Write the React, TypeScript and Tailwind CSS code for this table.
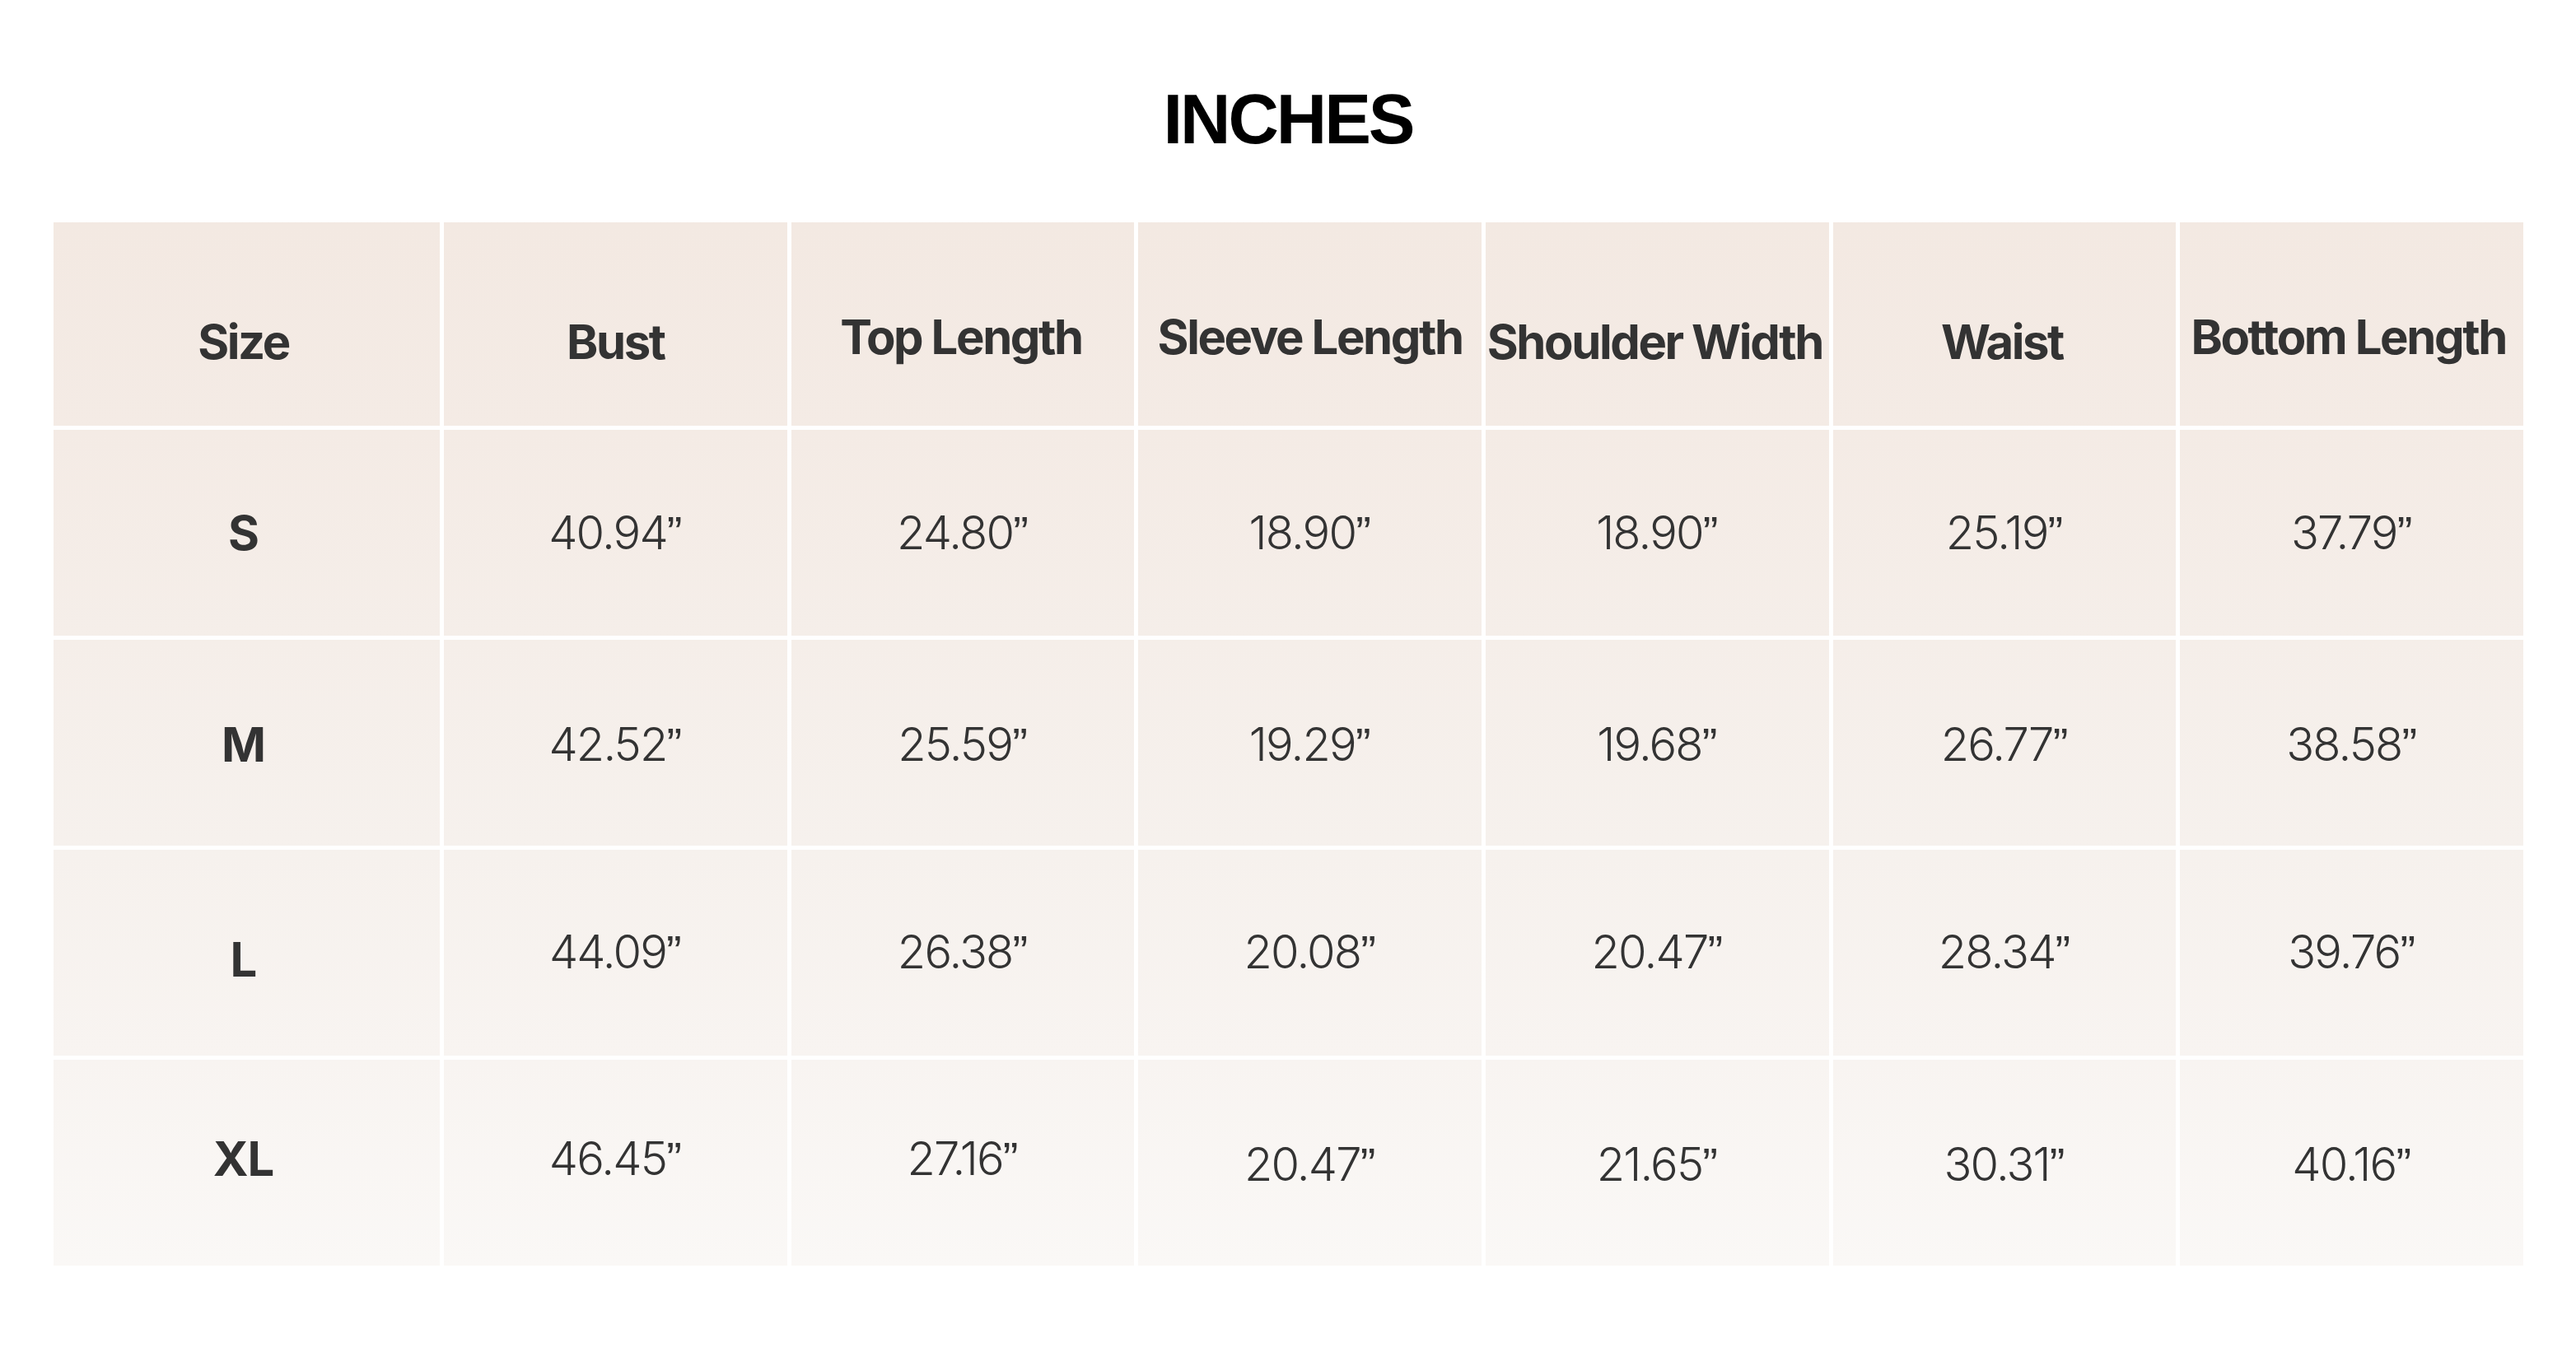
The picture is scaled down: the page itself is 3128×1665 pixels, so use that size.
import React from "react";

const headers = ["Size", "Bust", "Top Length", "Sleeve Length", "Shoulder Width", "Waist", "Bottom Length"];
// the "Length" headers sit a little higher in their cells
const headerPad = [
  "pt-[44px] pr-[8px]",
  "pt-[44px]",
  "pt-[32px] pr-[4px]",
  "pt-[32px]",
  "pt-[44px] pr-[6px]",
  "pt-[44px] pr-[6px]",
  "pt-[32px] pr-[8px]",
];

const rows: { size: string; vals: string[]; cls: string; pad: string }[] = [
  { size: "S", vals: ["40.94", "24.80", "18.90", "18.90", "25.19", "37.79"], cls: "from-[#f4ebe5] to-[#f5eee9]", pad: "" },
  { size: "M", vals: ["42.52", "25.59", "19.29", "19.68", "26.77", "38.58"], cls: "from-[#f5eee9] to-[#f6f1ed]", pad: "pt-[4px]" },
  { size: "L", vals: ["44.09", "26.38", "20.08", "20.47", "28.34", "39.76"], cls: "from-[#f6f1ed] to-[#f8f4f1]", pad: "" },
  { size: "XL", vals: ["46.45", "27.16", "20.47", "21.65", "30.31", "40.16"], cls: "from-[#f8f4f1] to-[#faf8f6]", pad: "" },
];

function valPad(size: string, j: number) {
  if (size === "XL") return j >= 2 ? "pt-[4px]" : "pb-[10px]";
  if (size === "L") return "pb-[2px]";
  if (size === "M") return "pt-[4px]";
  return "";
}

export default function App() {
  return (
    <div className="w-[3128px] h-[1665px] bg-white pt-[102px]">
      <h1 className="h-[85px] text-center text-[85px] leading-[85px] font-bold tracking-[-3px] text-black font-['Liberation_Sans',Arial,sans-serif]">
        INCHES
      </h1>
      <div className="mt-[83px] pl-[65px] pr-[64px]">
        <div className="grid grid-cols-[469px_repeat(6,minmax(0,1fr))] grid-rows-[247px_250px_250px_250px_250px] gap-[5px] text-[#333333]">
          {headers.map((h, i) => (
            <div
              key={h}
              className={`bg-gradient-to-b from-[#f3e9e2] to-[#f4ebe5] flex justify-center items-center whitespace-nowrap text-[58px] font-bold tracking-[-2.4px] font-['Inter',sans-serif] ${headerPad[i]}`}
            >
              {h}
            </div>
          ))}
          {rows.map((r) => (
            <React.Fragment key={r.size}>
              <div
                className={`bg-gradient-to-b ${r.cls} flex justify-center items-center pr-[8px] text-[58px] font-bold tracking-[-1px] font-['Inter',sans-serif] ${
                  r.size === "L" ? "pt-[16px]" : r.size === "XL" ? "pb-[10px]" : r.pad
                }`}
              >
                {r.size}
              </div>
              {r.vals.map((v, j) => (
                <div
                  key={j}
                  className={`bg-gradient-to-b ${r.cls} flex justify-center items-center whitespace-nowrap text-[56px] font-light tracking-[-1.8px] font-['Inter',sans-serif] ${valPad(r.size, j)}`}
                >
                  {v}
                  <span className="font-['Liberation_Sans',Arial,sans-serif] font-normal tracking-normal">”</span>
                </div>
              ))}
            </React.Fragment>
          ))}
        </div>
      </div>
    </div>
  );
}
